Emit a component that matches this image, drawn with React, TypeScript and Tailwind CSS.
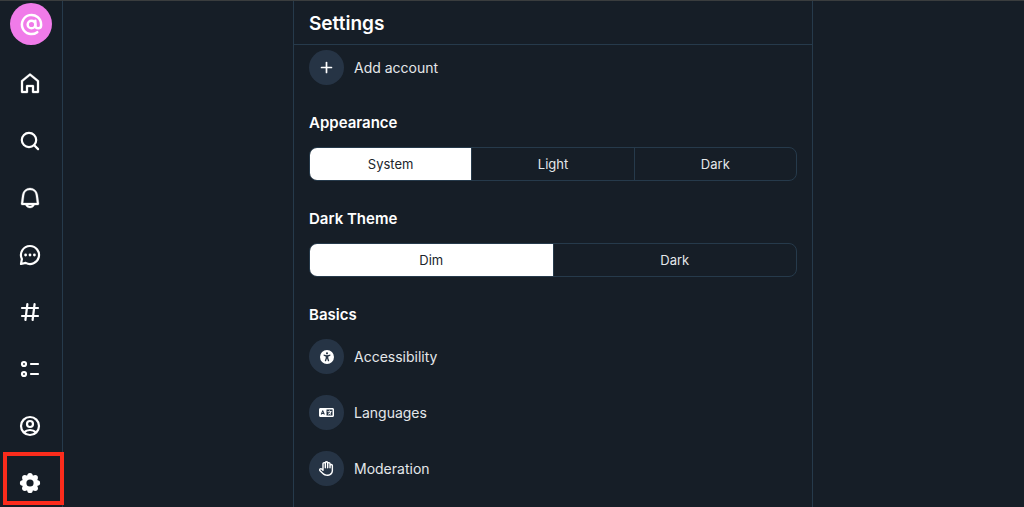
import { useState } from "react";
import type { ReactNode } from "react";
import { AtSign, Plus } from "lucide-react";
import { FaLanguage, FaRegHand, FaUniversalAccess } from "react-icons/fa6";

interface NavItem {
  label: string;
  icon: ReactNode;
}

const navItems: NavItem[] = [
  {
    label: "Home",
    icon: (
      <path
        fill="currentColor"
        stroke="currentColor"
        strokeWidth="0.3"
        fillRule="evenodd"
        d="M11.37 1.724a1 1 0 0 1 1.26 0l8 6.5A1 1 0 0 1 21 9v11a1 1 0 0 1-1 1h-5a1 1 0 0 1-1-1v-5h-4v5a1 1 0 0 1-1 1H4a1 1 0 0 1-1-1V9a1 1 0 0 1 .37-.776l8-6.5ZM5 9.476V19h3v-5a1 1 0 0 1 1-1h6a1 1 0 0 1 1 1v5h3V9.476l-7-5.687-7 5.687Z"
      />
    ),
  },
  {
    label: "Search",
    icon: (
      <g stroke="currentColor" strokeWidth="2.2" strokeLinecap="round">
        <circle cx="11" cy="11" r="7.2" />
        <path d="m16.2 16.2 3.9 3.9" />
      </g>
    ),
  },
  {
    label: "Notifications",
    icon: (
      <path
        fill="currentColor"
        stroke="currentColor"
        strokeWidth="0.3"
        fillRule="evenodd"
        d="M4.216 8.815a7.853 7.853 0 0 1 15.568 0l1.207 9.053A1 1 0 0 1 20 19h-3.354c-.904 1.748-2.607 3-4.646 3-2.039 0-3.742-1.252-4.646-3H4a1 1 0 0 1-.991-1.132l1.207-9.053ZM9.778 19c.61.637 1.399 1 2.222 1s1.613-.363 2.222-1H9.778ZM12 4a5.853 5.853 0 0 0-5.802 5.08L5.142 17h13.716l-1.056-7.92A5.853 5.853 0 0 0 12 4Z"
      />
    ),
  },
  {
    label: "Messages",
    icon: (
      <>
        <path
          stroke="currentColor"
          strokeWidth="2.2"
          strokeLinejoin="round"
          d="M12 3a9 9 0 1 1-4.3 16.9L3 21l.9-5A9 9 0 0 1 12 3Z"
        />
        <g fill="currentColor">
          <circle cx="7.6" cy="12" r="1.4" />
          <circle cx="12" cy="12" r="1.4" />
          <circle cx="16.4" cy="12" r="1.4" />
        </g>
      </>
    ),
  },
  {
    label: "Feeds",
    icon: (
      <path
        stroke="currentColor"
        strokeWidth="2.2"
        strokeLinecap="round"
        d="M4 8h16M4 16h16M9.4 4 7.4 20M16.6 4l-2 16"
      />
    ),
  },
  {
    label: "Lists",
    icon: (
      <g stroke="currentColor" strokeWidth="2.2" strokeLinecap="round">
        <circle cx="6" cy="7" r="2" />
        <circle cx="6" cy="17" r="2" />
        <path d="M13 7h7M13 17h7" />
      </g>
    ),
  },
  {
    label: "Profile",
    icon: (
      <g stroke="currentColor" strokeWidth="2.2">
        <circle cx="12" cy="12" r="9" />
        <circle cx="12" cy="10" r="3" />
        <path d="M6 18.4c1.5-1.5 3.6-2.4 6-2.4s4.5.9 6 2.4" />
      </g>
    ),
  },
  {
    label: "Settings",
    icon: (
      <>
        <g fill="currentColor">
          <circle cx="12" cy="12" r="8" />
          <circle cx="12" cy="4.6" r="2.7" />
          <circle cx="17.2" cy="6.8" r="2.7" />
          <circle cx="19.4" cy="12" r="2.7" />
          <circle cx="17.2" cy="17.2" r="2.7" />
          <circle cx="12" cy="19.4" r="2.7" />
          <circle cx="6.8" cy="17.2" r="2.7" />
          <circle cx="4.6" cy="12" r="2.7" />
          <circle cx="6.8" cy="6.8" r="2.7" />
        </g>
        <circle cx="12" cy="12" r="3.6" fill="#161e27" />
      </>
    ),
  },
];

const basics: NavItem[] = [
  { label: "Accessibility", icon: <FaUniversalAccess size={14} /> },
  { label: "Languages", icon: <FaLanguage size={15} /> },
  { label: "Moderation", icon: <FaRegHand size={15} /> },
];

const Sidebar = () => (
  <nav className="flex w-[63px] shrink-0 flex-col items-center border-r border-[#263a4b] pt-[2px]">
    <a
      href="#profile"
      aria-label="Account"
      className="mb-[10px] flex size-[42px] items-center justify-center rounded-full bg-[#f07be9]"
    >
      <AtSign size={23} strokeWidth={2.6} />
    </a>
    {navItems.map(({ label, icon }) => (
      <a
        key={label}
        href={`#${label.toLowerCase()}`}
        aria-label={label}
        className="relative flex h-[57px] w-full items-center justify-center pr-[2px]"
      >
        <svg width="24" height="24" viewBox="0 0 24 24" fill="none">
          {icon}
        </svg>
        {label === "Settings" && (
          <span className="absolute top-[-2px] -right-[2px] h-[53px] w-[61px] border-4 border-[#fb2c1c]" />
        )}
      </a>
    ))}
  </nav>
);

interface SettingsRowProps {
  label: string;
  icon: ReactNode;
}

const SettingsRow = ({ label, icon }: SettingsRowProps) => (
  <button
    type="button"
    className="flex cursor-pointer items-center gap-[10px] text-left text-sm text-[#e4e7ea]"
  >
    <span className="flex size-[35px] items-center justify-center rounded-full bg-[#263445] text-white">
      {icon}
    </span>
    {label}
  </button>
);

interface SegmentedControlProps {
  title: string;
  options: string[];
}

const SegmentedControl = ({ title, options }: SegmentedControlProps) => {
  const [selected, setSelected] = useState(options[0]);

  return (
    <section className="flex flex-col gap-[14px]">
      <h2 className="text-[15px] leading-5 font-semibold">{title}</h2>
      <div
        role="group"
        aria-label={title}
        className="flex h-[34px] divide-x divide-[#263a4b] overflow-hidden rounded-lg border border-[#263a4b]"
      >
        {options.map((option) => (
          <button
            key={option}
            type="button"
            aria-pressed={option === selected}
            onClick={() => setSelected(option)}
            className={`flex-1 cursor-pointer pt-[2px] text-[13px] ${option === selected ? "bg-white text-[#20252b]" : "text-[#e4e7ea]"}`}
          >
            {option}
          </button>
        ))}
      </div>
    </section>
  );
};

const App = () => {
  return (
    <div className="flex min-h-screen border-t border-[#3a3d3e] bg-[#161e27] font-[Inter,sans-serif] text-white">
      <Sidebar />
      <div className="flex flex-1 justify-center pl-[19px]">
        <main className="w-full max-w-[520px] border-x border-[#263a4b]">
          <header className="flex h-11 items-center border-b border-[#263a4b] px-[15px] pt-1">
            <h1 className="text-[19px] font-semibold">Settings</h1>
          </header>
          <div className="flex flex-col gap-7 px-[15px] pt-[5px] pb-4">
            <SettingsRow
              label="Add account"
              icon={<Plus size={17} strokeWidth={2.4} />}
            />
            <SegmentedControl
              title="Appearance"
              options={["System", "Light", "Dark"]}
            />
            <SegmentedControl title="Dark Theme" options={["Dim", "Dark"]} />
            <section>
              <h2 className="mb-[14px] text-[15px] leading-5 font-semibold">
                Basics
              </h2>
              <div className="flex flex-col gap-[21px]">
                {basics.map(({ label, icon }) => (
                  <SettingsRow key={label} label={label} icon={icon} />
                ))}
              </div>
            </section>
          </div>
        </main>
      </div>
    </div>
  );
};

export default App;
